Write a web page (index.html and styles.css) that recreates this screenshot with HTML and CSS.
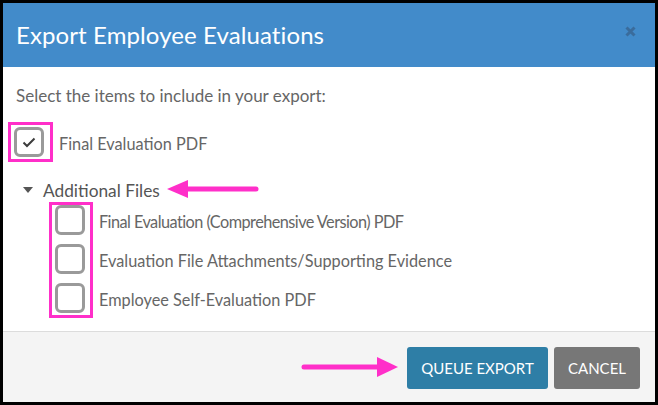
FILE: index.html
```html
<!DOCTYPE html>
<html>
<head>
<meta charset="utf-8">
<link rel="stylesheet" href="styles.css">
</head>
<body>
<div class="modal">
  <div class="header">
    <div class="title">Export Employee Evaluations</div>
    <svg class="close" width="11" height="11" viewBox="0 0 11 11"><path d="M1.5 1.5 L9.5 9.5 M9.5 1.5 L1.5 9.5" stroke="#3a6c9c" stroke-width="3" stroke-linecap="butt"/></svg>
  </div>
  <div class="body">
    <div class="intro">Select the items to include in your export:</div>
    <div class="row first">
      <span class="cb checked"><svg width="14" height="11" viewBox="0 0 14 11"><path d="M1.5 5.5 L5 9 L12.5 1.5" fill="none" stroke="#3c3c3c" stroke-width="2"/></svg></span>
      <span class="label">Final Evaluation PDF</span>
    </div>
    <div class="group">
      <span class="caret"></span>
      <span class="group-label">Additional Files</span>
    </div>
    <div class="sublist">
      <div class="row"><span class="cb"></span><span class="label tight">Final Evaluation (Comprehensive Version) PDF</span></div>
      <div class="row"><span class="cb"></span><span class="label">Evaluation File Attachments/Supporting Evidence</span></div>
      <div class="row"><span class="cb"></span><span class="label">Employee Self-Evaluation PDF</span></div>
    </div>
  </div>
  <div class="footer">
    <button class="btn primary">QUEUE EXPORT</button>
    <button class="btn secondary">CANCEL</button>
  </div>
</div>
<svg class="annot" width="658" height="405" viewBox="0 0 658 405">
  <rect x="9.5" y="123.5" width="42" height="37" fill="none" stroke="#ff2fc9" stroke-width="3"/>
  <rect x="50.5" y="203.5" width="41" height="113" fill="none" stroke="#ff2fc9" stroke-width="3"/>
  <line x1="182" y1="189" x2="256" y2="189" stroke="#ff2fc9" stroke-width="5" stroke-linecap="round"/>
  <polygon points="167,189 188,180 188,198" fill="#ff2fc9"/>
  <line x1="304" y1="367" x2="380" y2="367" stroke="#ff2fc9" stroke-width="5" stroke-linecap="round"/>
  <polygon points="398,367 377,357 377,377" fill="#ff2fc9"/>
</svg>
</body>
</html>
```
FILE: styles.css
```css
html, body {
  margin: 0;
  padding: 0;
  background: #000;
  width: 658px;
  height: 405px;
  overflow: hidden;
  font-family: Lato, "Open Sans", sans-serif;
}
.modal {
  margin: 3px;
  width: 652px;
  height: 399px;
  background: #fff;
  display: flex;
  flex-direction: column;
}
.header {
  height: 64px;
  background: #428bca;
  display: flex;
  align-items: center;
  justify-content: space-between;
  padding: 0 19px 0 13px;
  flex: none;
}
.title {
  color: #fff;
  font-size: 24px;
  letter-spacing: 0.1px;
  margin-top: -2px;
}
.close {
  margin-top: -8px;
}
.body {
  flex: 1;
  padding: 19px 0 0 13px;
  color: #666;
  font-size: 17px;
}
.intro {
  line-height: 20px;
  height: 20px;
}
.row {
  display: flex;
  align-items: center;
  height: 30px;
}
.row.first {
  margin-top: 21px;
  margin-left: -2px;
}
.cb {
  width: 24px;
  height: 24px;
  border: 3px solid #9a9a9a;
  border-radius: 6px;
  flex: none;
  display: flex;
  align-items: center;
  justify-content: center;
  background: #fff;
}
.label {
  margin-left: 14px;
  color: #666;
  font-size: 16.3px;
  padding-top: 3px;
}
.row.first .label {
  margin-left: 15px;
}
.label.tight {
  letter-spacing: -0.55px;
}
.group {
  margin-top: 23px;
  height: 20px;
  display: flex;
  align-items: center;
  margin-left: 7px;
}
.caret {
  width: 0;
  height: 0;
  border-left: 5px solid transparent;
  border-right: 5px solid transparent;
  border-top: 6px solid #555;
  margin-right: 10px;
}
.group-label {
  color: #555;
  font-size: 17.3px;
}
.sublist {
  margin-top: 5px;
  margin-left: 39px;
  display: flex;
  flex-direction: column;
  gap: 9px;
}
.footer {
  height: 70px;
  flex: none;
  background: #f4f4f4;
  border-top: 1px solid #dcdcdc;
  display: flex;
  justify-content: flex-end;
  align-items: center;
  gap: 6px;
  padding-right: 15px;
}
.btn {
  height: 42px;
  border: none;
  border-radius: 3px;
  color: #fff;
  font-family: Lato, sans-serif;
  font-size: 15px;
  padding: 0;
  margin-top: 2px;
}
.primary {
  width: 141px;
  background: #2e7ea6;
}
.secondary {
  width: 86px;
  background: #777;
}
.annot {
  position: absolute;
  left: 0;
  top: 0;
  pointer-events: none;
}
```
